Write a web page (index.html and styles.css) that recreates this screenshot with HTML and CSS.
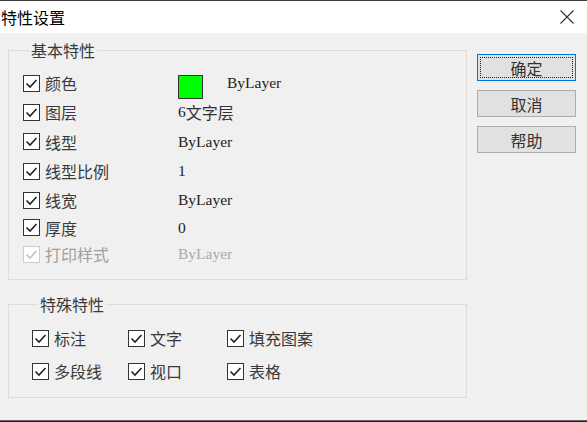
FILE: index.html
```html
<!DOCTYPE html>
<html lang="zh-CN">

<head>
    <meta charset="UTF-8">
    <meta name="viewport" content="width=device-width, initial-scale=1.0">
    <title>特性设置</title>
    <link rel="stylesheet" href="styles.css">
</head>

<body>
    <div class="dialog">
        <div class="titlebar">
            <span class="title">特性设置</span>
            <span class="close">
                <svg width="14" height="14" viewBox="0 0 14 14">
                    <path d="M0.5 0.5 L13.5 13.5 M13.5 0.5 L0.5 13.5" stroke="#333" stroke-width="1.1" fill="none" />
                </svg>
            </span>
        </div>
        <div class="content">
            <div class="groups">
                <fieldset class="group basic">
                    <legend>基本特性</legend>
                    <div class="prop-grid">
                        <label class="check"><span class="box"></span>颜色</label>
                        <div class="value"><span class="swatch"></span><span class="after-swatch">ByLayer</span></div>

                        <label class="check"><span class="box"></span>图层</label>
                        <div class="value">6<span class="cjk">文字层</span></div>

                        <label class="check"><span class="box"></span>线型</label>
                        <div class="value">ByLayer</div>

                        <label class="check"><span class="box"></span>线型比例</label>
                        <div class="value">1</div>

                        <label class="check"><span class="box"></span>线宽</label>
                        <div class="value">ByLayer</div>

                        <label class="check"><span class="box"></span>厚度</label>
                        <div class="value">0</div>

                        <label class="check disabled"><span class="box"></span>打印样式</label>
                        <div class="value disabled">ByLayer</div>
                    </div>
                </fieldset>

                <fieldset class="group special">
                    <legend>特殊特性</legend>
                    <div class="special-grid">
                        <label class="check"><span class="box"></span>标注</label>
                        <label class="check"><span class="box"></span>文字</label>
                        <label class="check"><span class="box"></span>填充图案</label>
                        <label class="check"><span class="box"></span>多段线</label>
                        <label class="check"><span class="box"></span>视口</label>
                        <label class="check"><span class="box"></span>表格</label>
                    </div>
                </fieldset>
            </div>

            <div class="buttons">
                <button class="btn default">确定</button>
                <button class="btn">取消</button>
                <button class="btn">帮助</button>
            </div>
        </div>
    </div>
</body>

</html>
```

FILE: styles.css
```css
* {
    margin: 0;
    padding: 0;
    box-sizing: border-box;
}

body {
    width: 587px;
    height: 422px;
    font-family: "Noto Sans CJK SC", sans-serif;
    color: #333;
    background: #f0f0f0;
}

.dialog {
    height: 422px;
    display: flex;
    flex-direction: column;
    border-top: 1px solid #3c3c3c;
    border-bottom: 1px solid #1f1f1f;
}

.titlebar {
    height: 32px;
    background: #fff;
    display: flex;
    align-items: center;
    justify-content: space-between;
    padding: 0 13px 0 1px;
}

.title {
    font-size: 16px;
    line-height: 20px;
    color: #000;
}

.close {
    display: flex;
}

.content {
    flex: 1;
    display: flex;
    background: #f0f0f0;
    box-shadow: inset 0 -1px 0 #666;
}

.groups {
    width: 459px;
    margin-left: 8px;
    padding-top: 8px;
}

.group {
    border: 1px solid #dcdcdc;
    margin: 0;
}

.group legend {
    font-size: 16px;
    line-height: 18px;
    margin-left: 6px;
    padding: 0 2px;
    color: #3a3a3a;
}

.basic {
    padding: 10px 0 12px 14px;
}

.special {
    margin-top: 15px;
    padding: 11px 0 12px 23px;
}

.prop-grid {
    display: grid;
    grid-template-columns: 155px auto;
    grid-template-rows: 28px 30px 29px 30px 28px 27px 26px;
    align-items: center;
}

.special-grid {
    display: grid;
    grid-template-columns: 96px 99px auto;
    grid-template-rows: 28px 28px;
    row-gap: 5px;
    align-items: center;
}

.check {
    display: flex;
    align-items: center;
    gap: 5px;
    font-size: 16px;
    line-height: 20px;
    color: #3a3a3a;
}

.box {
    width: 17px;
    height: 17px;
    border: 1px solid #333;
    background: #fff url("data:image/svg+xml,%3Csvg xmlns='http://www.w3.org/2000/svg' width='15' height='15'%3E%3Cpath d='M2.5 7.5 L6 11 L12.5 4' stroke='%23222' stroke-width='1.6' fill='none'/%3E%3C/svg%3E") no-repeat center;
}

.check.disabled {
    color: #a0a0a0;
}

.check.disabled .box {
    border-color: #cccccc;
    background: #fff url("data:image/svg+xml,%3Csvg xmlns='http://www.w3.org/2000/svg' width='15' height='15'%3E%3Cpath d='M2.5 7.5 L6 11 L12.5 4' stroke='%23c4c4c4' stroke-width='1.6' fill='none'/%3E%3C/svg%3E") no-repeat center;
}

.value {
    display: flex;
    align-items: center;
    font-family: "Liberation Serif", "Noto Sans CJK SC", serif;
    font-size: 15.5px;
    color: #222;
}

.value .cjk {
    font-family: "Noto Sans CJK SC", sans-serif;
    font-size: 16px;
    color: #333;
}

.value.disabled {
    color: #a8a8a8;
}

.swatch {
    width: 25px;
    height: 24px;
    margin-top: 8px;
    background: #00ff00;
    border: 1px solid #333;
}

.after-swatch {
    margin-left: 24px;
}

.buttons {
    margin: 21px 0 0 10px;
    display: flex;
    flex-direction: column;
    gap: 9px;
}

.btn {
    width: 99px;
    height: 27px;
    background: #e1e1e1;
    border: 1px solid #adadad;
    font-family: "Noto Sans CJK SC", sans-serif;
    font-size: 16px;
    color: #333;
}

.btn.default {
    border-color: #0078d7;
    outline: 1px dotted #222;
    outline-offset: -4px;
}
```
